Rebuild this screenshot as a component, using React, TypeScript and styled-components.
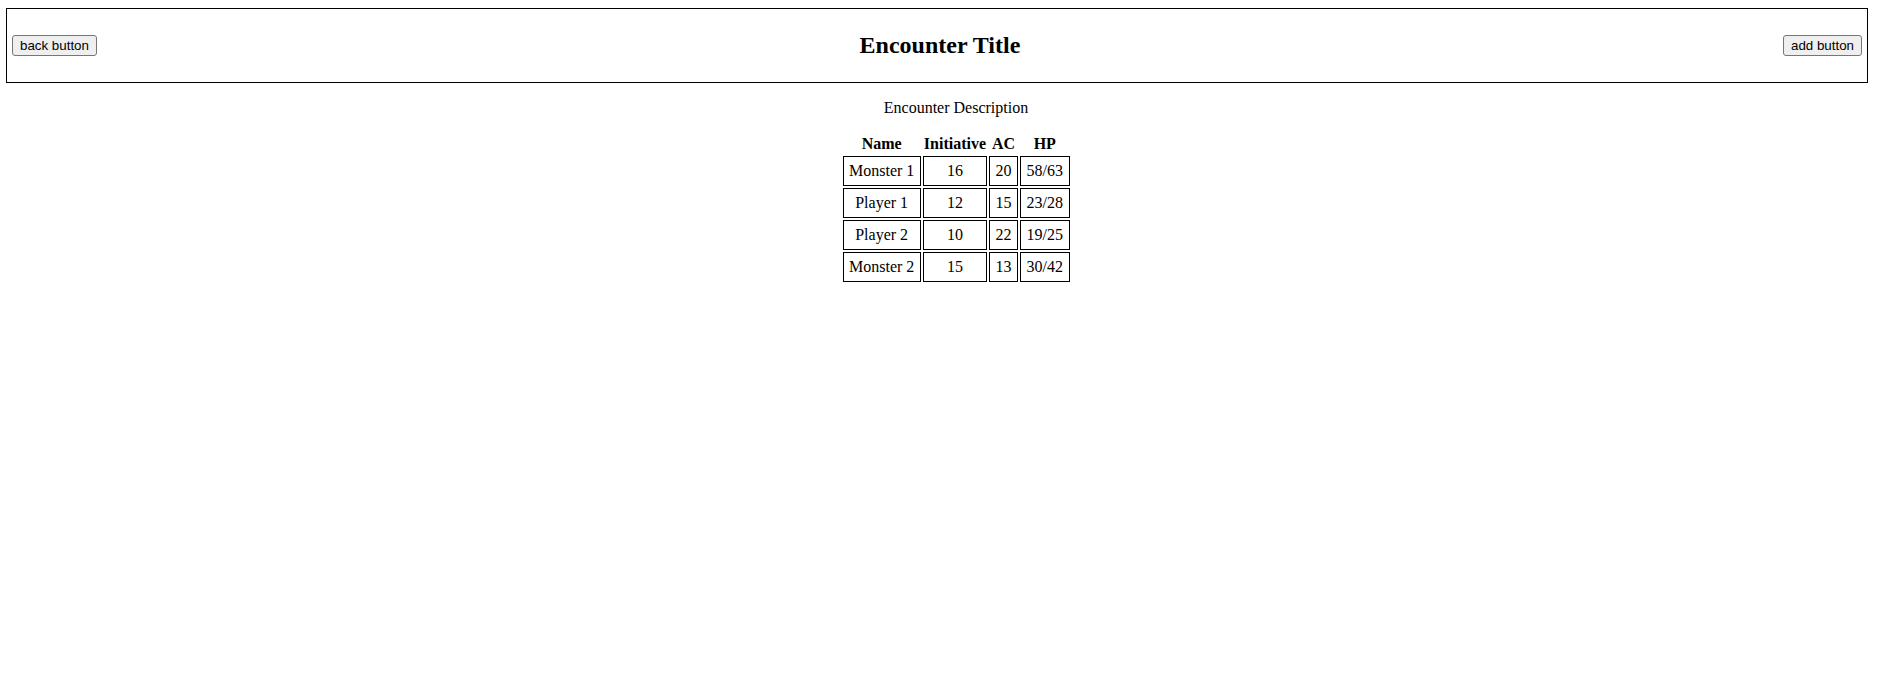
import React from "react";
import styled, { createGlobalStyle } from "styled-components";

const GlobalStyle = createGlobalStyle`
  html, body {
    margin: 0;
    padding: 0;
    background: #ffffff;
  }
  body {
    font-family: "Liberation Serif", "Times New Roman", serif;
    font-size: 16px;
    color: #000000;
  }
`;

const Page = styled.div`
  padding: 8px 31px 0 6px;
`;

const Header = styled.header`
  display: flex;
  align-items: center;
  box-sizing: border-box;
  height: 75px;
  padding: 0 5px;
  border: 1px solid #000000;
`;

const NavButton = styled.button`
  font-family: "Liberation Sans", Arial, sans-serif;
  font-size: 13.333px;
  line-height: normal;
  color: #000000;
  background: #efefef;
  border: 1px solid #767676;
  border-radius: 3px;
  padding: 2px 7px;
  margin: 0;
  cursor: pointer;
`;

const Title = styled.h2`
  flex: 1;
  margin: 0;
  text-align: center;
  font-family: "Liberation Serif", "Times New Roman", serif;
  font-size: 24px;
  font-weight: bold;
`;

const Main = styled.main`
  padding-left: 38px;
`;

const Description = styled.p`
  margin: 16px 0 15px;
  text-align: center;
  font-size: 16px;
`;

const Table = styled.table`
  margin: 0 auto;
  border-collapse: separate;
  border-spacing: 2px;
  font-family: "Liberation Serif", "Times New Roman", serif;
  font-size: 16px;
`;

const HeadCell = styled.th`
  padding: 1px;
  font-weight: bold;
  text-align: center;
`;

const Cell = styled.td`
  padding: 5px 5.5px;
  border: 1px solid #000000;
  text-align: center;
`;

const combatants = [
  { name: "Monster 1", initiative: 16, ac: 20, hp: "58/63" },
  { name: "Player 1", initiative: 12, ac: 15, hp: "23/28" },
  { name: "Player 2", initiative: 10, ac: 22, hp: "19/25" },
  { name: "Monster 2", initiative: 15, ac: 13, hp: "30/42" },
];

export default function App() {
  return (
    <>
      <GlobalStyle />
      <Page>
        <Header>
          <NavButton>back button</NavButton>
          <Title>Encounter Title</Title>
          <NavButton>add button</NavButton>
        </Header>
        <Main>
          <Description>Encounter Description</Description>
          <Table>
            <thead>
              <tr>
                <HeadCell>Name</HeadCell>
                <HeadCell>Initiative</HeadCell>
                <HeadCell>AC</HeadCell>
                <HeadCell>HP</HeadCell>
              </tr>
            </thead>
            <tbody>
              {combatants.map((c) => (
                <tr key={c.name}>
                  <Cell>{c.name}</Cell>
                  <Cell>{c.initiative}</Cell>
                  <Cell>{c.ac}</Cell>
                  <Cell>{c.hp}</Cell>
                </tr>
              ))}
            </tbody>
          </Table>
        </Main>
      </Page>
    </>
  );
}
